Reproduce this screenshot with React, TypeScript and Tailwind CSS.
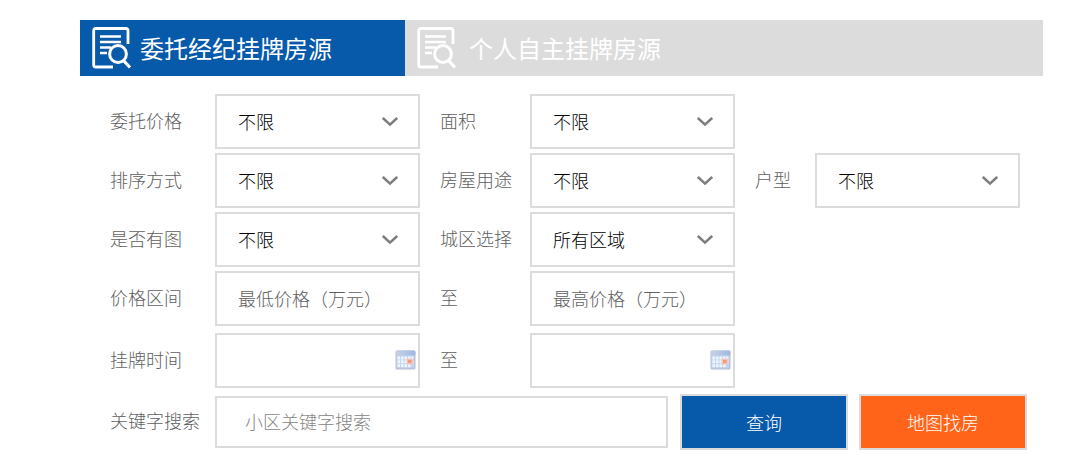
import React, { useState } from "react";
import clsx from "clsx";

interface FieldProps {
  id: string;
  label: string;
  labelClass: string;
}

interface SelectFieldProps extends FieldProps {
  options: string[];
}

interface InputFieldProps extends FieldProps {
  placeholder?: string;
  calendar?: boolean;
}

// Label widths for the three columns of the form
const COL_1 = "w-[105px]";
const COL_2 = "w-[90px]";
const COL_3 = "w-[60px]";

const LABEL = "shrink-0 pb-1 text-[#606060]";

const TABS = ["委托经纪挂牌房源", "个人自主挂牌房源"];

const SearchDocIcon: React.FC = () => (
  <svg width="40" height="44" viewBox="0 0 40 44" fill="none" stroke="currentColor" className="shrink-0" aria-hidden="true">
    <path d="M36 18V4.5a2 2 0 0 0-2-2H3.7a2 2 0 0 0-2 2V39a2 2 0 0 0 2 2H21" strokeWidth="2.8" />
    <path d="M8 10.5h21M8 16h21M8 21.5h11M8 27h7" strokeWidth="2.6" />
    <circle cx="26" cy="28" r="8.4" strokeWidth="3" />
    <path d="M31.5 34.5l6.5 7" strokeWidth="3.2" />
  </svg>
);

const ChevronIcon: React.FC = () => (
  <svg
    width="16"
    height="10"
    viewBox="0 0 16 10"
    fill="none"
    stroke="#7d7d7d"
    strokeWidth="2.6"
    className="pointer-events-none absolute top-[23px] right-[22px]"
    aria-hidden="true"
  >
    <path d="M0.8 1L8 7.6L15.2 1" />
  </svg>
);

const CalendarIcon: React.FC = () => (
  <svg width="21" height="20" viewBox="0 0 21 20" className="absolute top-[17px] right-1" aria-hidden="true">
    <defs>
      <linearGradient id="cal-head" x1="0" y1="0" x2="1" y2="0">
        <stop offset="0" stopColor="#c9d2e2" />
        <stop offset="1" stopColor="#9fb7e4" />
      </linearGradient>
    </defs>
    <rect x="0.5" y="0.5" width="20" height="19" rx="1.5" fill="#b7c2d6" />
    <rect x="0.5" y="0.5" width="20" height="5" rx="1.5" fill="url(#cal-head)" />
    <rect x="1.5" y="5.5" width="17.5" height="12" fill="#c3d6f1" />
    <g fill="#eef5fe">
      <path d="M2.5 6.5h2.5v3H2.5zM6 6.5h2.5v3H6zM9.5 6.5H12v3H9.5zM13 6.5h2.5v3H13zM16.3 6.5h2v3h-2z" />
      <path d="M2.5 10.3h2.5v3H2.5zM6 10.3h2.5v3H6zM9.5 10.3H12v3H9.5zM16.3 10.3h2v3h-2z" />
      <path d="M2.5 14.2h2.5v3H2.5zM6 14.2h2.5v3H6zM9.5 14.2H12v3H9.5zM13 14.2h2.5v3H13z" />
    </g>
    <rect x="11.5" y="8.5" width="6.5" height="6" rx="1" fill="#f6c4b4" />
    <rect x="13" y="10" width="3.5" height="3" fill="#f19a80" />
  </svg>
);

const SelectField: React.FC<SelectFieldProps> = ({ id, label, labelClass, options }) => (
  <div className="flex items-center">
    <label htmlFor={id} className={clsx(LABEL, labelClass)}>
      {label}
    </label>
    <div className="relative w-[205px]">
      <select
        id={id}
        className="block h-[55px] w-full appearance-none border-2 border-[#dcdcdc] bg-white pr-10 pb-[2px] pl-[21px] text-black"
      >
        {options.map((option) => (
          <option key={option}>{option}</option>
        ))}
      </select>
      <ChevronIcon />
    </div>
  </div>
);

const InputField: React.FC<InputFieldProps> = ({ id, label, labelClass, placeholder, calendar }) => (
  <div className="flex items-center">
    <label htmlFor={id} className={clsx(LABEL, labelClass)}>
      {label}
    </label>
    <div className="relative w-[205px]">
      <input
        id={id}
        type="text"
        placeholder={placeholder}
        className="block h-[55px] w-full border-2 border-[#dcdcdc] bg-white px-[21px] pb-[2px] text-black placeholder:text-[#606060]"
      />
      {calendar && <CalendarIcon />}
    </div>
  </div>
);

const App: React.FC = () => {
  const [active, setActive] = useState(0);

  return (
    <main
      className="min-h-screen bg-white pt-5 pr-[26px] pb-5 pl-20 text-lg leading-6 font-light"
      style={{ fontFamily: '"Noto Sans CJK SC", sans-serif' }}
    >
      <nav className="flex bg-[#dcdcdc]">
        {TABS.map((tab, i) => (
          <button
            key={tab}
            type="button"
            onClick={() => setActive(i)}
            className={clsx(
              "flex h-14 w-[325px] items-center pl-3 text-2xl font-normal text-white",
              i === 0 ? "gap-2" : "gap-3",
              active === i && "bg-[#0759aa]"
            )}
          >
            <SearchDocIcon />
            {tab}
          </button>
        ))}
      </nav>

      <form className="pt-[18px] pl-[30px]" onSubmit={(e) => e.preventDefault()}>
        <div className="flex flex-col gap-1">
          <div className="flex gap-5">
            <SelectField id="price" label="委托价格" labelClass={COL_1} options={["不限"]} />
            <SelectField id="area" label="面积" labelClass={COL_2} options={["不限"]} />
          </div>
          <div className="flex gap-5">
            <SelectField id="sort" label="排序方式" labelClass={COL_1} options={["不限"]} />
            <SelectField id="usage" label="房屋用途" labelClass={COL_2} options={["不限"]} />
            <SelectField id="layout" label="户型" labelClass={COL_3} options={["不限"]} />
          </div>
          <div className="flex gap-5">
            <SelectField id="photo" label="是否有图" labelClass={COL_1} options={["不限"]} />
            <SelectField id="district" label="城区选择" labelClass={COL_2} options={["所有区域"]} />
          </div>
          <div className="flex gap-5">
            <InputField id="price-min" label="价格区间" labelClass={COL_1} placeholder="最低价格（万元）" />
            <InputField id="price-max" label="至" labelClass={COL_2} placeholder="最高价格（万元）" />
          </div>
        </div>

        <div className="mt-[7px] flex gap-5">
          <InputField id="date-from" label="挂牌时间" labelClass={COL_1} calendar />
          <InputField id="date-to" label="至" labelClass={COL_2} calendar />
        </div>

        <div className="mt-[6px] flex items-center">
          <label htmlFor="keyword" className={clsx(LABEL, COL_1)}>
            关键字搜索
          </label>
          <input
            id="keyword"
            type="text"
            placeholder="小区关键字搜索"
            className="h-[52px] w-[453px] border-2 border-[#dcdcdc] bg-white px-7 pb-[2px] placeholder:text-[#858585]"
          />
          <button type="submit" className="ml-3 h-14 w-[168px] border-2 border-[#dcdcdc] bg-[#0759aa] text-white">
            查询
          </button>
          <button type="button" className="ml-[11px] h-14 w-[168px] border-2 border-[#dcdcdc] bg-[#ff6418] text-white">
            地图找房
          </button>
        </div>
      </form>
    </main>
  );
};

export default App;
